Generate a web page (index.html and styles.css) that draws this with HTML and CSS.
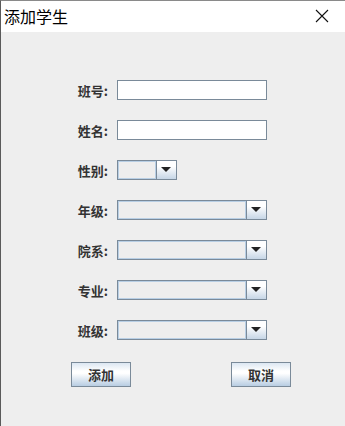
FILE: index.html
```html
<!DOCTYPE html>
<html lang="zh-CN">
<head>
  <meta charset="UTF-8" />
  <title>添加学生</title>
  <link rel="stylesheet" href="styles.css">
</head>
<body>
  <div class="window">
    <div class="titlebar">
      <span class="title">添加学生</span>
      <svg class="close" width="14" height="14" viewBox="0 0 14 14">
        <path d="M1 1 L13 13 M13 1 L1 13" stroke="#111" stroke-width="1.1" fill="none"/>
      </svg>
    </div>

    <form class="form">
      <div class="row">
        <label>班号:</label>
        <input type="text" class="field" />
      </div>
      <div class="row">
        <label>姓名:</label>
        <input type="text" class="field" />
      </div>
      <div class="row">
        <label>性别:</label>
        <div class="combo small"><span class="box"></span><span class="arrow"></span></div>
      </div>
      <div class="row">
        <label>年级:</label>
        <div class="combo"><span class="box"></span><span class="arrow"></span></div>
      </div>
      <div class="row">
        <label>院系:</label>
        <div class="combo"><span class="box"></span><span class="arrow"></span></div>
      </div>
      <div class="row">
        <label>专业:</label>
        <div class="combo"><span class="box"></span><span class="arrow"></span></div>
      </div>
      <div class="row">
        <label>班级:</label>
        <div class="combo"><span class="box"></span><span class="arrow"></span></div>
      </div>

      <div class="actions">
        <button type="button">添加</button>
        <button type="button">取消</button>
      </div>
    </form>
  </div>
</body>
</html>
```

FILE: styles.css
```css
html, body { margin: 0; height: 100%; }
body { background: #eeeeee; font-family: "Noto Sans CJK SC", "Noto Sans", sans-serif; }
.window { height: 100%; border-left: 1px solid #5a5a5a; border-top: 1px solid #8a8a8a; box-sizing: border-box; background: #eeeeee; }
.titlebar { height: 31px; background: #fff; display: flex; align-items: center; justify-content: space-between; padding: 0 16px 0 3px; }
.title { font-size: 16px; color: #000; line-height: 1; margin-top: -2px; }
.close { margin-top: -1px; }

.form { padding-top: 48px; display: flex; flex-direction: column; gap: 20px; }
.row { display: flex; align-items: center; height: 20px; }
.row label { width: 40px; margin-left: 67px; margin-right: 9px; text-align: right; font-size: 13px; font-weight: bold; color: #333; white-space: nowrap; }

.field { width: 150px; height: 20px; box-sizing: border-box; margin: 0; padding: 0; border: 1px solid #7a8a99; background: #fff; outline: none; }

.combo { width: 150px; height: 20px; box-sizing: border-box; border: 1px solid #7a8a99; display: flex; background: #eeeeee; }
.combo.small { width: 60px; }
.combo .box { flex: 1; border: 1px solid #b8cfe5; }
.combo .arrow { width: 19px; border-left: 1px solid #7a8a99; background: linear-gradient(#ffffff, #ffffff 30%, #c6d6e6); position: relative; }
.combo .arrow::after { content: ""; position: absolute; left: 4px; top: 6px; border-left: 5px solid transparent; border-right: 5px solid transparent; border-top: 5px solid #222; }

.actions { display: flex; gap: 100px; padding-left: 70px; margin-top: 2px; }
.actions button { width: 60px; height: 25px; margin: 0; padding: 0; border: 1px solid #7a8a99; background: linear-gradient(#dce7f2, #ffffff 35%, #ffffff 45%, #b8cde2); font-family: "Noto Sans CJK SC", sans-serif; font-size: 13px; font-weight: bold; color: #333; }
```
